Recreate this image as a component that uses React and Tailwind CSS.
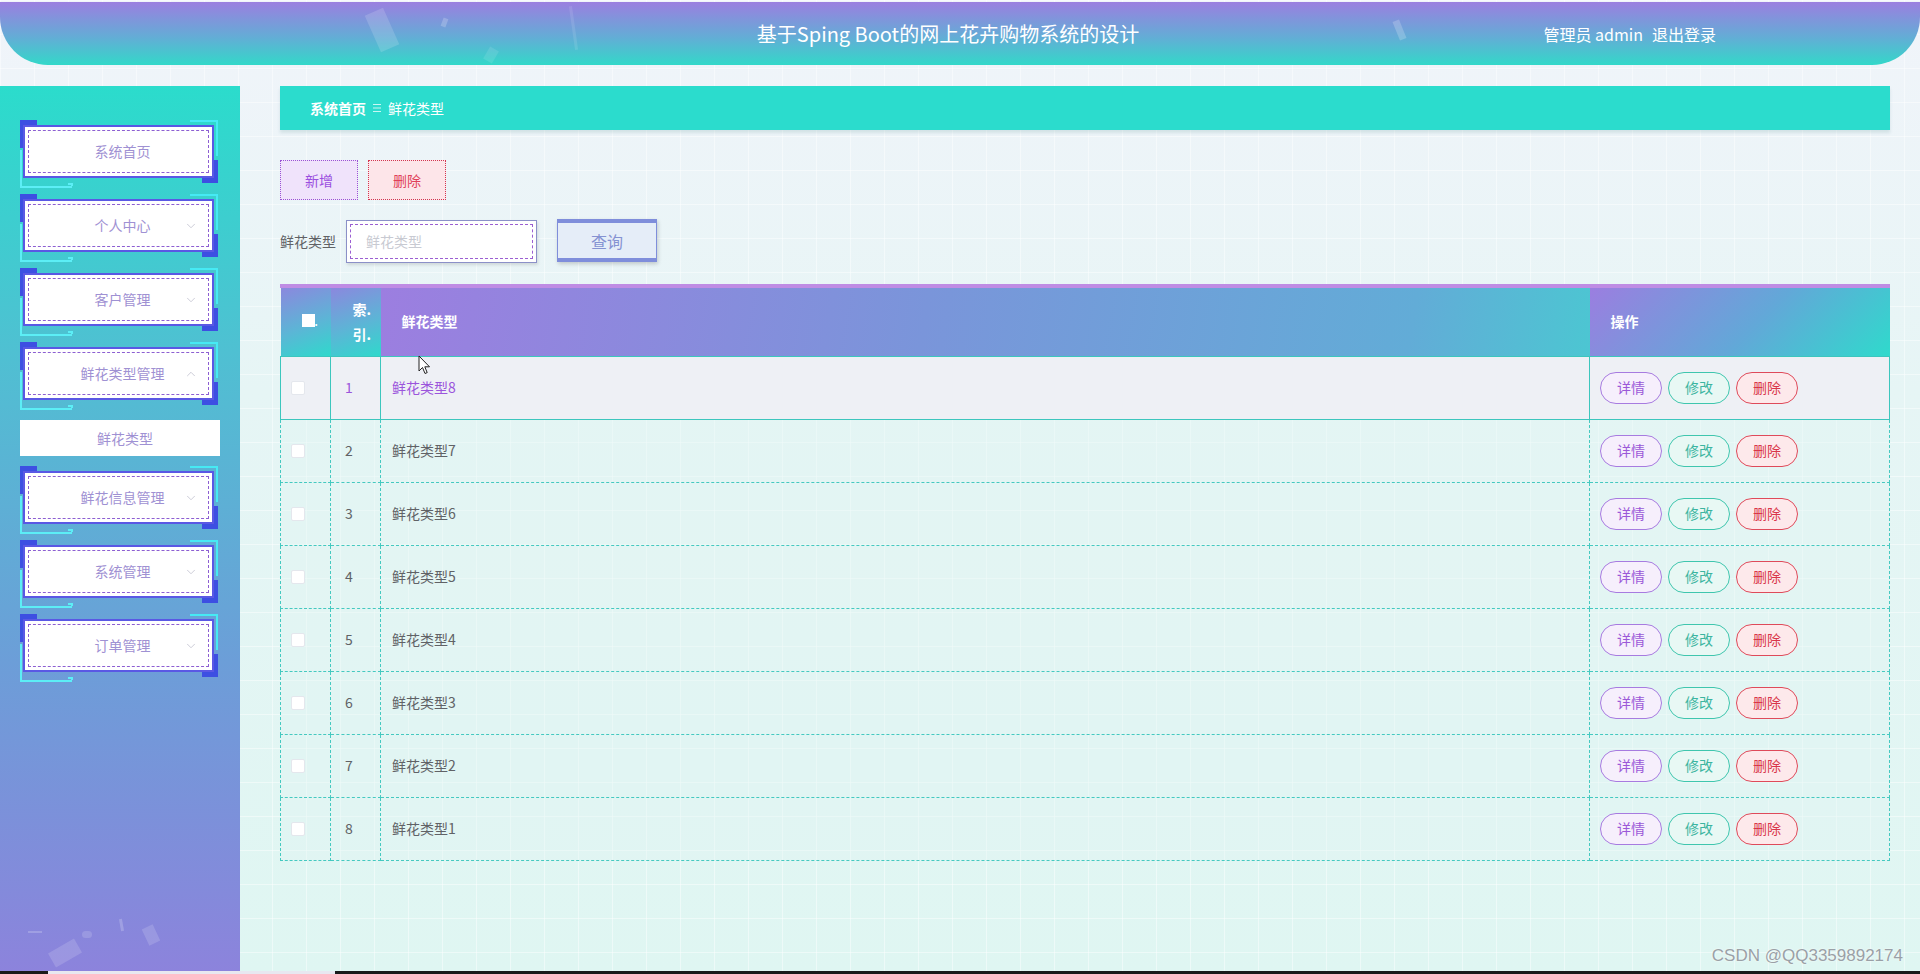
import React from 'react';
import { ChevronDown, ChevronUp } from 'lucide-react';

const menus = [
  { label: '系统首页' },
  { label: '个人中心', arrow: 'down' },
  { label: '客户管理', arrow: 'down' },
  { label: '鲜花类型管理', arrow: 'up', sub: ['鲜花类型'] },
  { label: '鲜花信息管理', arrow: 'down' },
  { label: '系统管理', arrow: 'down' },
  { label: '订单管理', arrow: 'down' },
];

const rows = [
  { id: 1, name: '鲜花类型8' },
  { id: 2, name: '鲜花类型7' },
  { id: 3, name: '鲜花类型6' },
  { id: 4, name: '鲜花类型5' },
  { id: 5, name: '鲜花类型4' },
  { id: 6, name: '鲜花类型3' },
  { id: 7, name: '鲜花类型2' },
  { id: 8, name: '鲜花类型1' },
];

const MenuItem = ({ item }) => (
  <div className="relative h-[68px] w-[198px] shrink-0">
    {/* corner ornaments */}
    <div className="absolute left-0 top-0 w-[17px] h-[28px] bg-[#3d4fe2]" />
    <div className="absolute left-[182px] top-[40px] w-[16px] h-[23px] bg-[#3d4fe2]" />
    <div className="absolute left-[170px] top-0 w-[28px] h-[2px] bg-[#46eaf4]" />
    <div className="absolute right-0 top-0 w-[2px] h-[36px] bg-[#46eaf4]" />
    <div className="absolute left-0 top-[30px] w-[2px] h-[38px] bg-[#5ceef6]" />
    <div className="absolute left-0 top-[66px] w-[52px] h-[2px] bg-[#5ceef6]" />
    <div className="absolute left-[48px] top-[63px] w-[5px] h-[3px] border-t-2 border-r-2 border-[#5ceef6]" />

    <div className="relative z-10 ml-[3px] mt-[5px] w-[191px] h-[53px] bg-white border-2 border-[#5a58e4] p-[3px]">
      <div className="relative h-full w-full border border-dashed border-[#8d5fd2] flex items-center justify-center pl-[8px] text-[14px] text-[#9f91d3]">
        {item.label}
        {item.arrow === 'down' && (
          <ChevronDown className="absolute right-[10px] top-1/2 -translate-y-1/2 text-[#bdbdcc]" size={14} strokeWidth={1.3} />
        )}
        {item.arrow === 'up' && (
          <ChevronUp className="absolute right-[10px] top-1/2 -translate-y-1/2 text-[#bdbdcc]" size={14} strokeWidth={1.3} />
        )}
      </div>
    </div>
  </div>
);

const Cursor = () => (
  <svg className="absolute left-[418px] top-[269px] z-20" width="13" height="20" viewBox="0 0 13 20">
    <path d="M1 1 L1 16 L4.5 12.5 L7 18.5 L9.2 17.6 L6.8 11.8 L11.5 11.8 Z" fill="#fff" stroke="#222" strokeWidth="1" strokeLinejoin="round" />
  </svg>
);

export default function App() {
  return (
    <div className="relative w-full h-[974px] overflow-hidden flex flex-col font-['Noto_Sans_CJK_SC','Noto_Sans',sans-serif] bg-[linear-gradient(180deg,#f1f4fa_0%,#e6f5f5_40%,#dff6f2_100%)]">
      {/* faint grid texture */}
      <div className="absolute inset-0 pointer-events-none bg-[linear-gradient(rgba(255,255,255,0.45)_1px,transparent_1px),linear-gradient(90deg,rgba(255,255,255,0.45)_1px,transparent_1px)] bg-[size:34px_34px]" />

      {/* Header */}
      <header className="relative mt-[2px] h-[63px] shrink-0 rounded-bl-[48px] rounded-br-[48px] overflow-hidden bg-[linear-gradient(180deg,#9b7fe0_0%,#64acd6_55%,#33d8c9_100%)] grid grid-cols-[1fr_auto_1fr] items-center">
        <div className="absolute left-[372px] top-[8px] w-[20px] h-[40px] rotate-[-24deg] bg-white/15" />
        <div className="absolute left-[442px] top-[16px] w-[5px] h-[9px] rotate-[20deg] bg-white/20" />
        <div className="absolute left-[572px] top-[4px] w-[3px] h-[44px] rotate-[-8deg] bg-white/10" />
        <div className="absolute left-[486px] top-[46px] w-[10px] h-[14px] rotate-[30deg] bg-white/10" />
        <div className="absolute left-[1396px] top-[18px] w-[7px] h-[20px] rotate-[-22deg] bg-white/20" />
        <div className="relative" />
        <h1 className="relative pr-[24px] text-[20px] text-white tracking-[0px]">基于Sping Boot的网上花卉购物系统的设计</h1>
        <div className="relative flex justify-end pr-[204px] text-[16px] text-white">
          <span>管理员 admin</span>
          <span className="ml-[9px]">退出登录</span>
        </div>
      </header>

      {/* Body */}
      <div className="relative flex flex-1 mt-[21px] min-h-0">
        {/* Sidebar */}
        <aside className="relative w-[240px] shrink-0 h-full overflow-hidden bg-[linear-gradient(180deg,#2bdccc_0%,#4fc0d2_30%,#6c9ed8_65%,#8c83dc_100%)] pt-[34px] pl-[20px] flex flex-col gap-[6px]">
          {menus.map((m) => (
            <React.Fragment key={m.label}>
              <MenuItem item={m} />
              {m.sub &&
                m.sub.map((s) => (
                  <div key={s} className="my-[4px] w-[200px] h-[36px] bg-white flex items-center justify-center pl-[10px] text-[14px] text-[#9f91d3]">
                    {s}
                  </div>
                ))}
            </React.Fragment>
          ))}
          <div className="absolute left-[50px] bottom-[10px] w-[30px] h-[16px] rotate-[-30deg] bg-white/15" />
          <div className="absolute left-[145px] bottom-[27px] w-[12px] h-[18px] rotate-[-25deg] bg-white/15" />
          <div className="absolute left-[82px] bottom-[33px] w-[10px] h-[7px] rounded-full bg-white/15" />
          <div className="absolute left-[120px] bottom-[40px] w-[3px] h-[12px] rotate-[-10deg] bg-white/20" />
          <div className="absolute left-[28px] bottom-[38px] w-[14px] h-[2px] bg-white/20" />
        </aside>

        {/* Main */}
        <main className="relative ml-[40px] w-[1610px] flex flex-col">
          {/* Breadcrumb */}
          <div className="h-[44px] bg-[#2bdccd] shadow-[0_3px_3px_rgba(60,120,130,0.15)] flex items-center pl-[30px] text-[14px] text-white">
            <span className="font-bold">系统首页</span>
            <svg className="mx-[7px]" width="8" height="10" viewBox="0 0 8 10">
              <path d="M0 1.5 H8 M0 5 H8 M0 8.5 H8" stroke="rgba(255,255,255,0.75)" strokeWidth="1" />
            </svg>
            <span>鲜花类型</span>
          </div>

          {/* Action buttons */}
          <div className="mt-[30px] flex gap-[10px]">
            <button className="w-[78px] h-[40px] bg-[#f0e3fb] border border-dotted border-[#9b52d4] text-[14px] text-[#9b4fe0]">新增</button>
            <button className="w-[78px] h-[40px] bg-[#fde5e9] border border-dotted border-[#d23550] text-[14px] text-[#e0405a]">删除</button>
          </div>

          {/* Search */}
          <div className="mt-[20px] flex items-center">
            <span className="text-[14px] text-[#606266] w-[66px]">鲜花类型</span>
            <div className="w-[191px] h-[43px] bg-white border border-[#8b90c8] p-[3px] shadow-[1px_2px_3px_rgba(0,0,0,0.12)]">
              <div className="h-full w-full border border-dashed border-[#9b5fd2] flex items-center pl-[15px] text-[14px] text-[#c8cad2]">鲜花类型</div>
            </div>
            <button className="ml-[20px] -mt-[2px] w-[100px] h-[43px] bg-[#e5edf8] border-x border-t-[4px] border-b-[4px] border-[#7f8edb] shadow-[1px_2px_4px_rgba(0,0,0,0.18)] text-[16px] text-[#8592d2]">
              查询
            </button>
          </div>

          {/* Table */}
          <div className="mt-[21px] border-t-[4px] border-[#bf8ce4]">
            <table className="w-full table-fixed border-collapse">
              <colgroup>
                <col className="w-[50px]" />
                <col className="w-[50px]" />
                <col />
                <col className="w-[300px]" />
              </colgroup>
              <thead>
                <tr className="h-[68px] text-[14px] font-bold text-white">
                  <th className="p-0 bg-[linear-gradient(160deg,#8b88de_0%,#5cb5d6_55%,#2fd9cc_100%)] text-left pl-[21px]">
                    <span className="inline-flex items-end">
                      <span className="w-[13px] h-[13px] bg-white inline-block" />
                      <span className="text-[10px] leading-none">.</span>
                    </span>
                  </th>
                  <th className="p-0 bg-[linear-gradient(160deg,#8b88de_0%,#5cb5d6_55%,#2fd9cc_100%)] text-left pl-[22px] leading-[25px]">
                    索.
                    <br />
                    引.
                  </th>
                  <th className="p-0 bg-[linear-gradient(100deg,#9c7ee0_0%,#7a95da_45%,#62acd7_85%,#4cc6d2_100%)] text-left pl-[21px]">鲜花类型</th>
                  <th className="p-0 bg-[linear-gradient(135deg,#9b7ee0_0%,#62a8d8_55%,#2fdacc_100%)] text-left pl-[21px]">操作</th>
                </tr>
              </thead>
              <tbody>
                {rows.map((r, i) => {
                  const active = i === 0;
                  const cell = active
                    ? 'border border-solid border-[#3cc6bd] bg-[#eef0f5]'
                    : 'border border-dashed border-[#45c9c0] bg-[#e0f5f3]/40';
                  const txt = active ? 'text-[#9b55dc]' : 'text-[#606266]';
                  return (
                    <tr key={r.id} className="h-[63px] text-[14px]">
                      <td className={`${cell} p-0 pl-[10px]`}>
                        <span className="block w-[14px] h-[14px] bg-white border border-[#e4e7ed] rounded-[2px]" />
                      </td>
                      <td className={`${cell} p-0 pl-[14px] ${txt}`}>{r.id}</td>
                      <td className={`${cell} p-0 pl-[11px] ${txt}`}>{r.name}</td>
                      <td className={`${cell} p-0 pl-[10px]`}>
                        <div className="flex gap-[6px]">
                          <button className="w-[62px] h-[32px] rounded-full border border-[#a77be0] bg-[#f6effc] text-[14px] text-[#9b59d8]">详情</button>
                          <button className="w-[62px] h-[32px] rounded-full border border-[#3fc6ae] bg-[#e8f8f4] text-[14px] text-[#3cb5a0]">修改</button>
                          <button className="w-[62px] h-[32px] rounded-full border border-[#df4a5a] bg-[#fde9eb] text-[14px] text-[#d9364a]">删除</button>
                        </div>
                      </td>
                    </tr>
                  );
                })}
              </tbody>
            </table>
          </div>
        </main>

        <Cursor />
      </div>

      {/* bottom scrollbar strip */}
      <div className="relative h-[3px] shrink-0 bg-[#1a1a1a]">
        <div className="absolute left-[48px] top-0 w-[287px] h-[3px] bg-[#e8e8f0]" />
      </div>

      {/* watermark */}
      <div className="absolute right-[17px] bottom-[6px] text-[17px] text-[#9aa0a6] font-['Liberation_Sans',Arial,sans-serif] [text-shadow:0_0_2px_#fff]">
        CSDN @QQ3359892174
      </div>
    </div>
  );
}
